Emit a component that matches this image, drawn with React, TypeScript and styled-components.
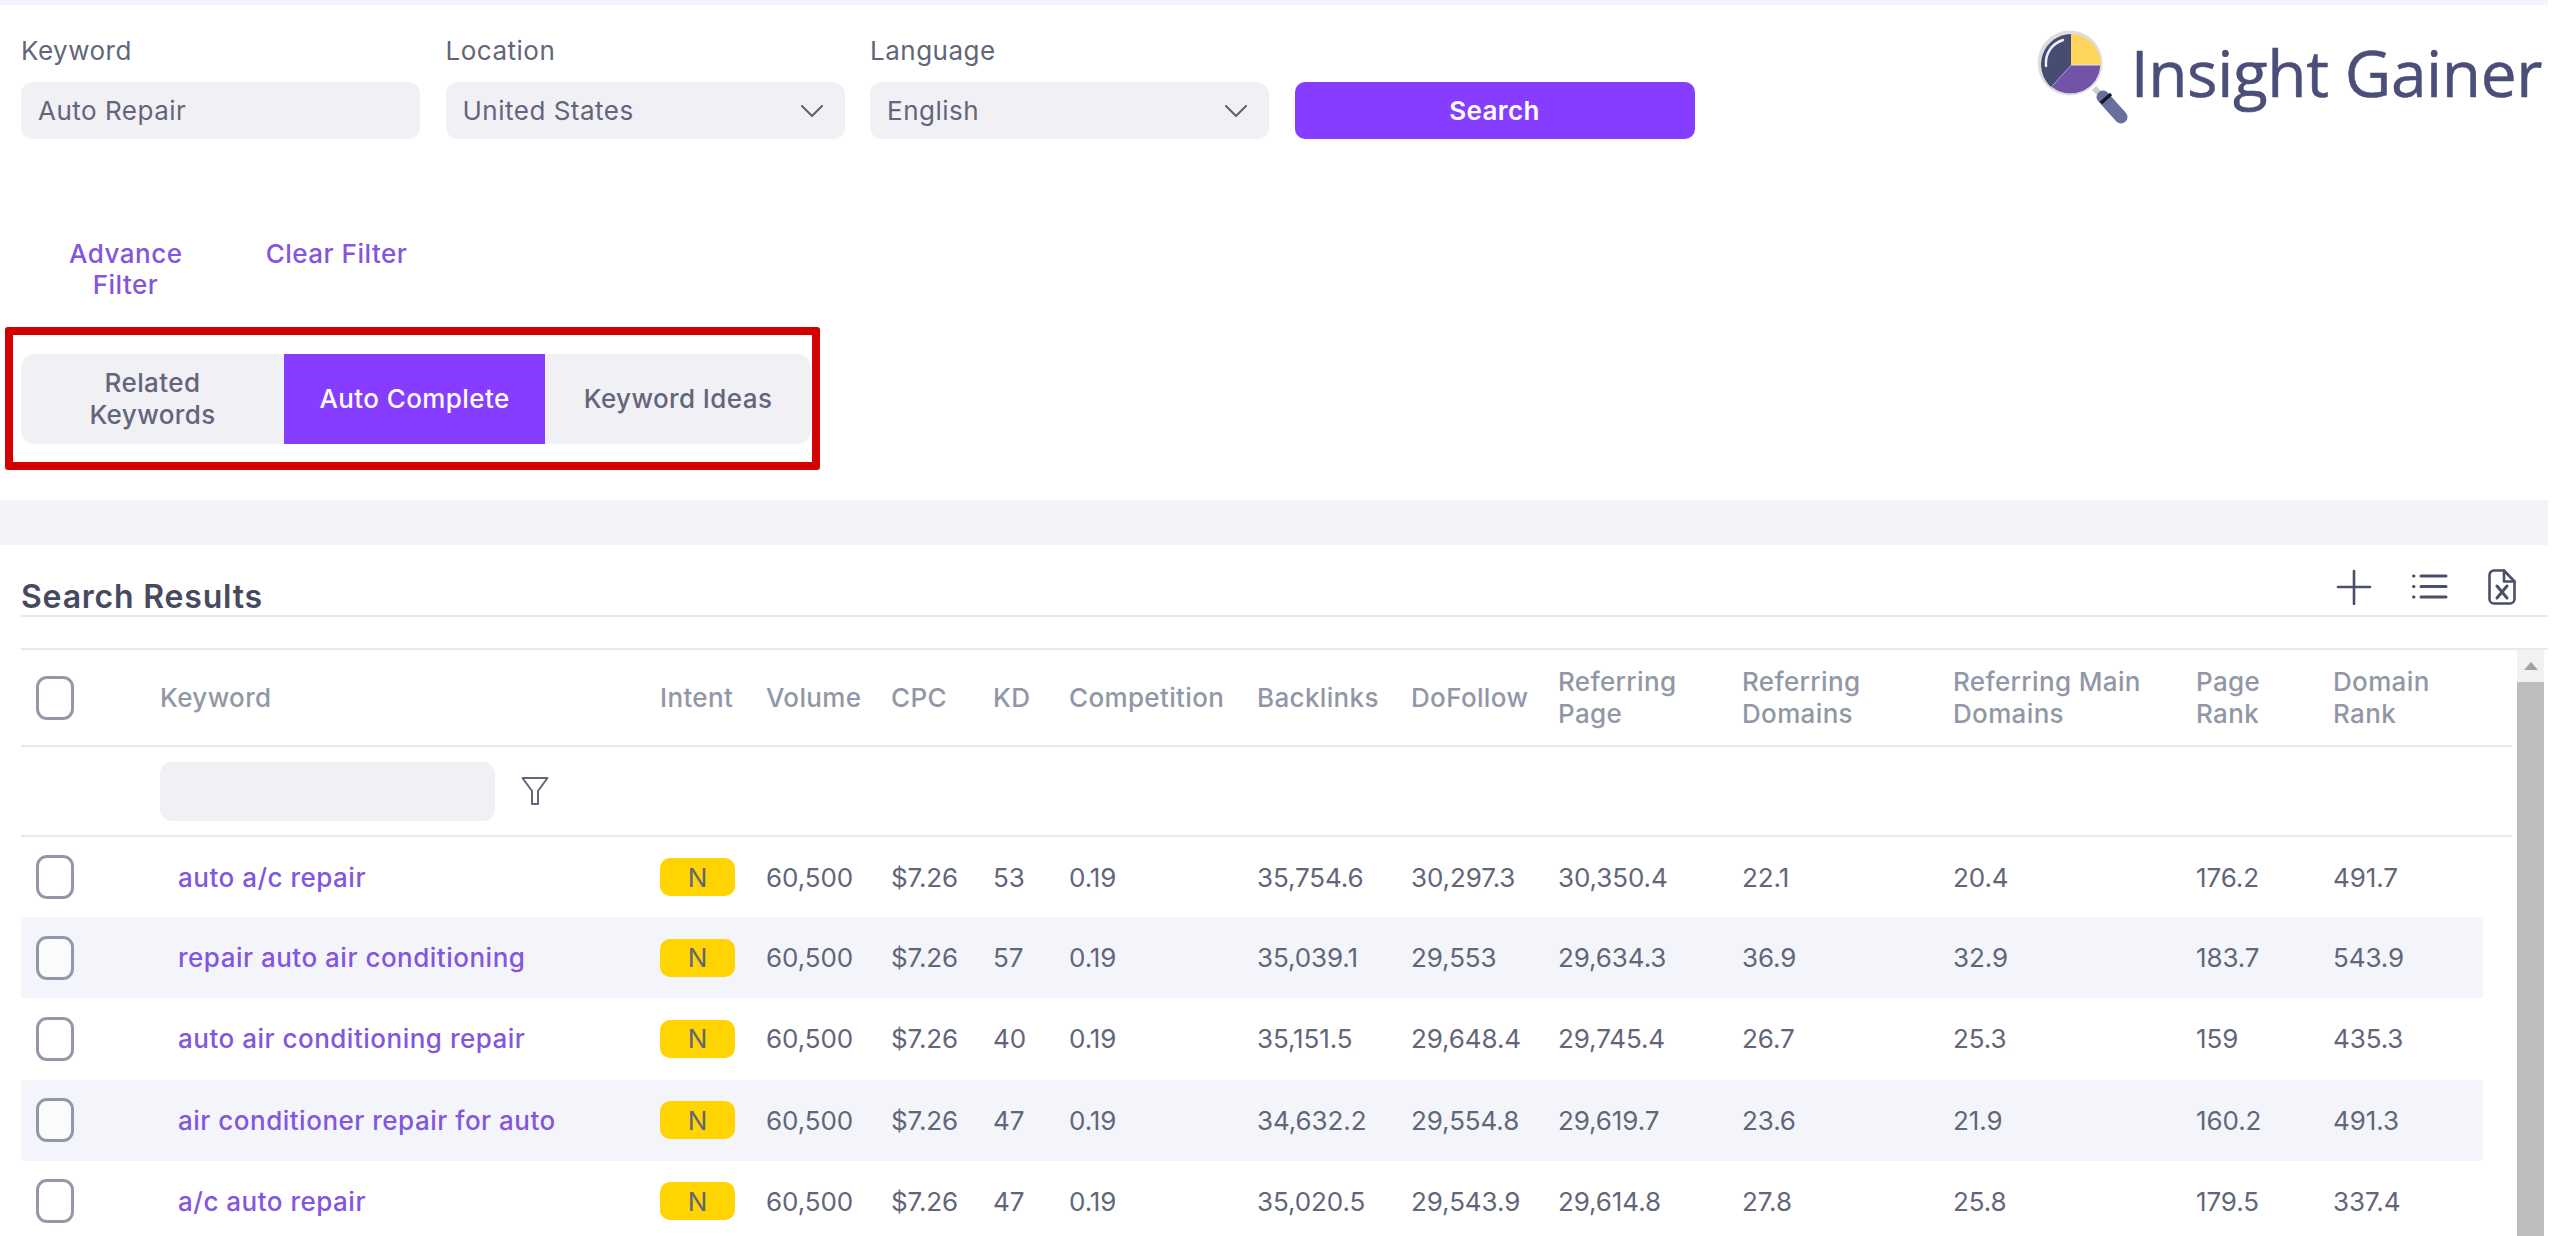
import React from "react";
import styled, { createGlobalStyle } from "styled-components";

const Global = createGlobalStyle`
  html, body { margin: 0; padding: 0; height: 100%; background: #fff; overflow: hidden; }
  * { box-sizing: border-box; }
  body { font-family: Inter, "Noto Sans", sans-serif; }
`;
const Page = styled.div`
  width: 2560px; height: 1236px; overflow: hidden; display: flex; flex-direction: column;
  color: #62667a; font-size: 26px; letter-spacing: 0.5px;
`;
const TopBand = styled.div`height: 5px; width: 2548px; flex: none; background: #f2f5fb;`;
const TopSection = styled.section`
  height: 495px; flex: none; padding: 30px 18px 0 21px; display: flex; flex-direction: column;
`;
const FormRow = styled.div`display: flex; align-items: flex-start;`;
const Field = styled.div`width: 399px; margin-right: 25.5px; display: flex; flex-direction: column; gap: 15px;`;
const Label = styled.div`height: 32px; line-height: 32px; color: #62667a;`;
const Control = styled.div`
  height: 57px; background: #f1f1f5; border-radius: 12px; padding: 0 21px 0 17px;
  display: flex; align-items: center; justify-content: space-between; color: #62667a;
`;
const SearchButton = styled.button`
  width: 400px; height: 57px; margin-top: 47px; border: 0; border-radius: 10px; background: #873dff; color: #fff;
  font: 600 26px Inter, sans-serif; letter-spacing: 0.4px;
`;
const Logo = styled.div`margin: -6px 0 0 auto; display: flex; align-items: flex-start;`;
const LogoText = styled.div`
  font: 400 64px/74px "Open Sans", sans-serif; color: #4a4e78; letter-spacing: -0.4px; margin: 7px 0 0 1px;
  -webkit-text-stroke: 0.5px #4a4e78;
`;
const FilterLinks = styled.div`display: flex; gap: 82px; margin: 99px 0 0 48px;`;
const FilterLink = styled.a<{ $w: number }>`
  width: ${(p) => p.$w}px; line-height: 31px; text-align: center; color: #8455dd; font-weight: 500;
`;
const Highlight = styled.div`
  width: 815px; height: 143px; margin: 27px 0 0 -16px; padding: 19px 0 0 8px;
  border: 8px solid #d40000; border-radius: 3px;
`;
const Tabs = styled.div`
  display: flex; width: 790px; height: 90px; background: #f1f1f5; border-radius: 14px; overflow: hidden;
`;
const Tab = styled.div<{ $w: number; $active?: boolean }>`
  width: ${(p) => p.$w}px; display: flex; align-items: center; justify-content: center; text-align: center;
  line-height: 32px; padding: 0 30px; font-weight: 500; letter-spacing: 0.4px;
  background: ${(p) => (p.$active ? "#873dff" : "transparent")};
  color: ${(p) => (p.$active ? "#fff" : "#62667a")};
`;
const Band = styled.div`height: 45px; width: 2548px; background: #f3f4f9; flex: none;`;
const Results = styled.section`flex: 1; min-height: 0; padding: 0 12px 0 21px; display: flex; flex-direction: column;`;
const ResultsHead = styled.div`
  height: 72px; flex: none; display: flex; align-items: flex-end; justify-content: space-between;
  border-bottom: 2px solid #e8e9ee;
`;
const Title = styled.h2`
  margin: 0; font-size: 32px; line-height: 36px; font-weight: 600; color: #464a60; letter-spacing: 0.8px;
`;
const Tools = styled.div`display: flex; align-items: center; gap: 40px; padding: 0 32px 10px 0;`;
const TableFrame = styled.div`
  margin-top: 31px; flex: 1; min-height: 0; display: flex; border-top: 2px solid #e8e9ee;
`;
const TableClip = styled.div`width: 2491px; flex: none;`;
const Table = styled.table`
  border-collapse: collapse; table-layout: fixed; width: 2491px;
  th, td { padding: 0; text-align: left; white-space: nowrap; }
`;
const Th = styled.th<{ $wrap?: boolean }>`
  height: 96px; font-weight: 500; color: #9297a8; line-height: 32px; border-bottom: 2px solid #e8e9ee; letter-spacing: 0.35px;
  && { white-space: ${(p) => (p.$wrap ? "normal" : "nowrap")}; padding-right: ${(p) => (p.$wrap ? "40px" : "0")}; }
`;
const FilterCell = styled.td`height: 90px; border-bottom: 2px solid #e8e9ee;`;
const FilterWrap = styled.div`display: flex; align-items: center; gap: 26px;`;
const FilterInput = styled.div`width: 335px; height: 59px; background: #f1f1f5; border-radius: 12px;`;
const Row = styled.tr<{ $odd: boolean }>`
  height: 81.2px; letter-spacing: -0.1px;
  td { background: ${(p) => (p.$odd ? "#f4f5fb" : "#fff")}; }
  td.spacer { background: #fff; }
`;
const CheckCell = styled.span`display: block; padding-left: 15px; line-height: 0;`;
const Check = styled.span`
  display: inline-block; width: 38px; height: 44px; border: 3px solid #9397a8; border-radius: 11px; background: rgba(255,255,255,.55);
`;
const KeywordLink = styled.a`padding-left: 18px; color: #8455dd; font-weight: 500; letter-spacing: 0.5px;`;
const Badge = styled.span`
  display: flex; align-items: center; justify-content: center; width: 75px; height: 38px;
  border-radius: 10px; background: #ffd400; color: #62667a; font-size: 26px;
`;
const Scrollbar = styled.div`
  width: 27px; margin-left: 5px; flex: none; background: #f1f1f1; display: flex; flex-direction: column; align-items: center;
`;
const ScrollUp = styled.div`height: 32px; flex: none; display: flex; align-items: center; justify-content: center;`;
const ScrollThumb = styled.div`flex: 1; align-self: stretch; background: #bdbdbd;`;

const widths = [139, 500, 106, 125, 102, 76, 188, 154, 147, 184, 211, 243, 137, 150, 29];
const heads: [string, boolean][] = [
  ["Keyword", false], ["Intent", false], ["Volume", false], ["CPC", false], ["KD", false], ["Competition", false],
  ["Backlinks", false], ["DoFollow", false], ["Referring Page", true], ["Referring Domains", true],
  ["Referring Main Domains", true], ["Page Rank", true], ["Domain Rank", true],
];
const rows = [
  ["auto a/c repair", "60,500", "$7.26", "53", "0.19", "35,754.6", "30,297.3", "30,350.4", "22.1", "20.4", "176.2", "491.7"],
  ["repair auto air conditioning", "60,500", "$7.26", "57", "0.19", "35,039.1", "29,553", "29,634.3", "36.9", "32.9", "183.7", "543.9"],
  ["auto air conditioning repair", "60,500", "$7.26", "40", "0.19", "35,151.5", "29,648.4", "29,745.4", "26.7", "25.3", "159", "435.3"],
  ["air conditioner repair for auto", "60,500", "$7.26", "47", "0.19", "34,632.2", "29,554.8", "29,619.7", "23.6", "21.9", "160.2", "491.3"],
  ["a/c auto repair", "60,500", "$7.26", "47", "0.19", "35,020.5", "29,543.9", "29,614.8", "27.8", "25.8", "179.5", "337.4"],
];

const Chevron = () => (
  <svg width="24" height="14" viewBox="0 0 24 14" fill="none" stroke="#5c6070" strokeWidth="2" strokeLinecap="round" strokeLinejoin="round">
    <path d="M2 2l10 10L22 2" />
  </svg>
);
const LogoMark = () => (
  <svg width="100" height="100" viewBox="0 10 100 100">
    <circle cx="40" cy="44" r="32.5" fill="#dedede" />
    <path d="M41 46H71A30.5 30.5 0 0 1 21 68z" fill="#7353a8" stroke="#e8e4f0" strokeWidth="1" />
    <path d="M41 46V15A30.5 30.5 0 0 0 21 68z" fill="#474c72" />
    <path d="M41 46V15A31 31 0 0 1 71 45.5H41z" fill="#fdd55c" />
    <path d="M16 47C15 35 21 25 33 21" fill="none" stroke="#eef" strokeWidth="2.5" strokeLinecap="round" />
    <path d="M64 69l8 8" stroke="#cfcfcf" strokeWidth="6" />
    <path d="M73 78l18 20" stroke="#686f9a" strokeWidth="13" strokeLinecap="round" />
    <path d="M71 84l10-9" stroke="#14152a" strokeWidth="3.5" />
  </svg>
);
const PlusIcon = () => (
  <svg width="36" height="36" viewBox="0 0 36 36" stroke="#4b4f68" strokeWidth="2.6" strokeLinecap="round">
    <path d="M18 2v33M2 18h32" />
  </svg>
);
const ListIcon = () => (
  <svg width="36" height="30" viewBox="0 0 36 30" stroke="#4b4f68" strokeWidth="3" strokeLinecap="round" fill="none">
    <path d="M9 4h25M9 14.5h25M9 25h25" />
    <path d="M1.5 4h.5M1.5 14.5h.5M1.5 25h.5" />
  </svg>
);
const FileXIcon = () => (
  <svg width="28" height="36" viewBox="0 0 28 36" stroke="#4b4f68" strokeWidth="2.6" fill="none" strokeLinejoin="round" strokeLinecap="round">
    <path d="M6 1.5h10l10.5 11V30a4.5 4.5 0 0 1-4.5 4.5H6A4.5 4.5 0 0 1 1.5 30V6A4.5 4.5 0 0 1 6 1.5z" />
    <path d="M16 1.5V12.5H26.5" />
    <path d="M9 17l10 12M19 17L9 29" strokeWidth="3" />
  </svg>
);
const FunnelIcon = () => (
  <svg width="28" height="30" viewBox="0 0 28 30" stroke="#62667a" strokeWidth="2" fill="none" strokeLinejoin="round">
    <path d="M1.5 2h25L17 15v13h-6V15z" />
  </svg>
);
const ScrollArrow = () => (
  <svg width="16" height="10" viewBox="0 0 16 10"><path d="M8 1l7 8H1z" fill="#a3a3a3" /></svg>
);

export default function App() {
  return (
    <Page>
      <Global />
      <TopBand />
      <TopSection>
        <FormRow>
          <Field>
            <Label>Keyword</Label>
            <Control>Auto Repair</Control>
          </Field>
          <Field>
            <Label>Location</Label>
            <Control>United States<Chevron /></Control>
          </Field>
          <Field>
            <Label>Language</Label>
            <Control>English<Chevron /></Control>
          </Field>
          <SearchButton>Search</SearchButton>
          <Logo>
            <LogoMark />
            <LogoText>Insight Gainer</LogoText>
          </Logo>
        </FormRow>
        <FilterLinks>
          <FilterLink $w={113}>Advance Filter</FilterLink>
          <FilterLink $w={145}>Clear Filter</FilterLink>
        </FilterLinks>
        <Highlight>
          <Tabs>
            <Tab $w={263}>Related Keywords</Tab>
            <Tab $w={261} $active>Auto Complete</Tab>
            <Tab $w={266}>Keyword Ideas</Tab>
          </Tabs>
        </Highlight>
      </TopSection>
      <Band />
      <Results>
        <ResultsHead>
          <Title>Search Results</Title>
          <Tools><PlusIcon /><ListIcon /><FileXIcon /></Tools>
        </ResultsHead>
        <TableFrame>
          <TableClip>
            <Table>
              <colgroup>{widths.map((w, i) => <col key={i} style={{ width: w }} />)}</colgroup>
              <thead>
                <tr>
                  <Th><CheckCell><Check /></CheckCell></Th>
                  {heads.map(([h, wrap]) => <Th key={h} $wrap={wrap}>{h}</Th>)}
                  <Th />
                </tr>
                <tr>
                  <FilterCell />
                  <FilterCell>
                    <FilterWrap><FilterInput /><FunnelIcon /></FilterWrap>
                  </FilterCell>
                  {widths.slice(2).map((_, i) => <FilterCell key={i} />)}
                </tr>
              </thead>
              <tbody>
                {rows.map((r, i) => (
                  <Row key={r[0]} $odd={i % 2 === 1}>
                    <td><CheckCell><Check /></CheckCell></td>
                    <td><KeywordLink>{r[0]}</KeywordLink></td>
                    <td><Badge>N</Badge></td>
                    {r.slice(1).map((c, j) => <td key={j}>{c}</td>)}
                    <td className="spacer" />
                  </Row>
                ))}
              </tbody>
            </Table>
          </TableClip>
          <Scrollbar>
            <ScrollUp><ScrollArrow /></ScrollUp>
            <ScrollThumb />
          </Scrollbar>
        </TableFrame>
      </Results>
    </Page>
  );
}
